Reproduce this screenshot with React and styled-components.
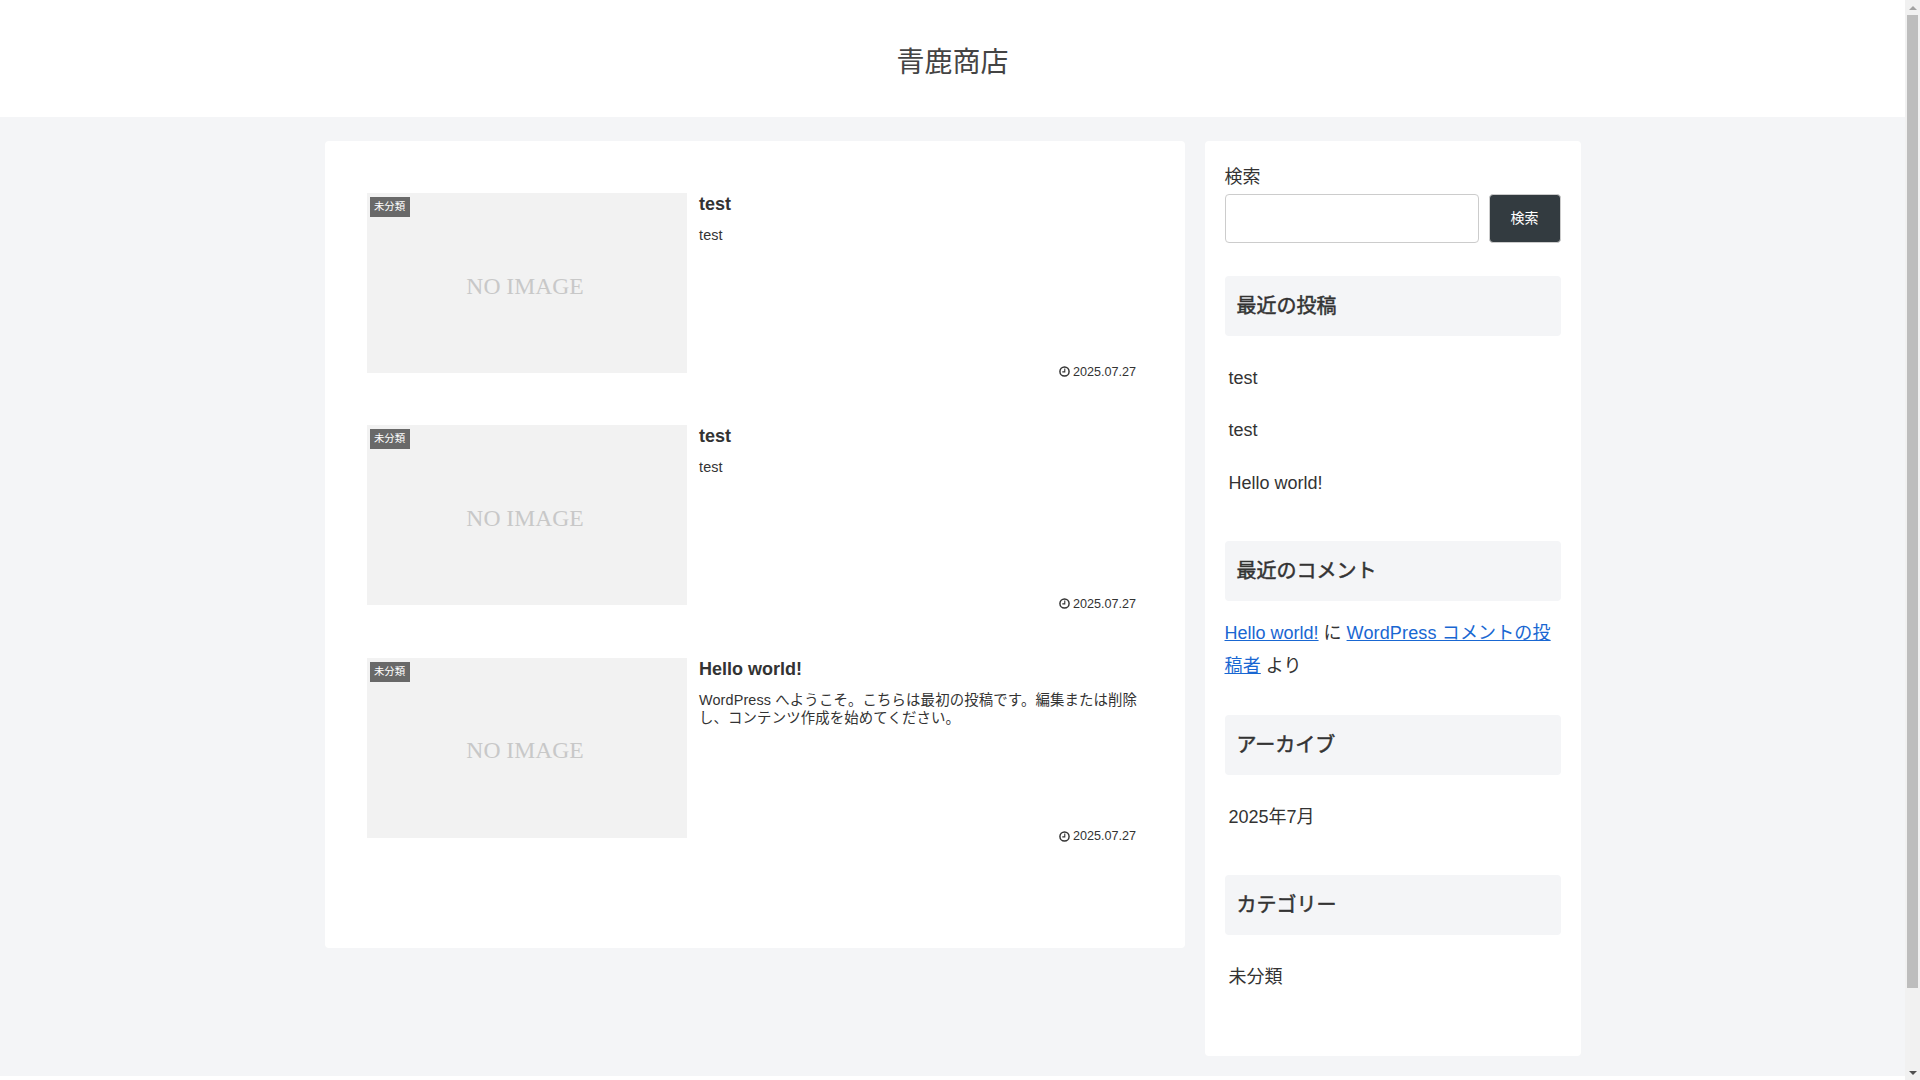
import React from "react";
import styled, { createGlobalStyle } from "styled-components";

const Global = createGlobalStyle`
  * { box-sizing: border-box; }
  html, body { margin: 0; padding: 0; }
  body {
    background: #f4f5f7;
    color: #333;
    font-family: "Liberation Sans", "Noto Sans CJK JP", sans-serif;
    font-size: 18px;
  }
`;

const Page = styled.div`
  padding-right: 15px;
`;
const ScrollTrack = styled.div`
  position: fixed;
  top: 0;
  right: 0;
  bottom: 0;
  width: 15px;
  background: #f1f1f1;
  display: flex;
  flex-direction: column;
  align-items: center;
`;
const ScrollButton = styled.div`
  flex: 0 0 15px;
  display: flex;
  align-items: center;
  justify-content: center;
`;
const ArrowUp = styled.span`
  width: 0;
  height: 0;
  border-left: 4px solid transparent;
  border-right: 4px solid transparent;
  border-bottom: 4px solid #a3a3a3;
`;
const ArrowDown = styled.span`
  width: 0;
  height: 0;
  border-left: 4px solid transparent;
  border-right: 4px solid transparent;
  border-top: 4px solid #505050;
`;
const ScrollThumb = styled.div`
  flex: 0 0 973px;
  width: 11px;
  background: #bdbdbd;
  margin-bottom: auto;
`;

const Header = styled.header`
  height: 117px;
  background: #fff;
  display: flex;
  justify-content: center;
  padding-top: 43px;
`;
const SiteName = styled.div`
  font-size: 28px;
  line-height: 40px;
  color: #444;
`;
const Content = styled.div`
  width: 1256px;
  margin: 24px auto 20px;
  display: flex;
  gap: 20px;
  align-items: flex-start;
`;
const Main = styled.main`
  width: 860px;
  height: 807px;
  background: #fff;
  border-radius: 4px;
  padding: 52px 42px 0;
`;
const Card = styled.article`
  height: 232.4px;
  display: flex;
  align-items: flex-start;
  gap: 12.5px;
`;
const Thumb = styled.div`
  position: relative;
  flex: 0 0 320px;
  height: 180px;
  background: #f2f2f2;
  display: flex;
  align-items: center;
  justify-content: center;
  padding: 6px 3px 0 0;
  font-family: "Liberation Serif", serif;
  font-size: 23.6px;
  color: #c8c8c8;
`;
const Label = styled.span`
  position: absolute;
  left: 3px;
  top: 4px;
  width: 40px;
  height: 20px;
  background: #696969;
  color: #fff;
  font-family: "Liberation Sans", "Noto Sans CJK JP", sans-serif;
  font-size: 10.4px;
  line-height: 20px;
  text-align: center;
`;
const Body = styled.div`
  flex: 1;
  min-width: 0;
  height: 188.6px;
  display: flex;
  flex-direction: column;
`;
const Title = styled.h2`
  margin: -1px 0 0;
  font-size: 18px;
  font-weight: 700;
  line-height: 24px;
`;
const Excerpt = styled.p`
  margin: 10px 0 0;
  font-size: 14.4px;
  line-height: 18.7px;
  letter-spacing: 0.14px;
  width: 445px;
`;
const Meta = styled.div`
  margin-top: auto;
  padding-right: 6.5px;
  display: flex;
  justify-content: flex-end;
  align-items: center;
  gap: 3px;
  font-size: 12.6px;
  line-height: 20px;
`;
const ClockIcon = () => (
  <svg width="11" height="11" viewBox="0 0 12 12" fill="none" stroke="#333" strokeWidth="1.6">
    <circle cx="6" cy="6" r="5" />
    <path d="M6.3 2.8V6.4H3.6" strokeWidth="1.2" />
  </svg>
);
const Sidebar = styled.aside`
  width: 376px;
  height: 915px;
  background: #fff;
  border-radius: 4px;
  padding: 19px 20px 0;
`;
const SearchLabel = styled.div`
  font-size: 18px;
  line-height: 34px;
`;
const SearchRow = styled.div`
  display: flex;
  gap: 10px;
  margin-bottom: 33px;
`;
const SearchInput = styled.div`
  width: 254px;
  height: 49px;
  background: #fff;
  border: 1px solid #ccc;
  border-radius: 4px;
`;
const SearchButton = styled.div`
  width: 72px;
  height: 49px;
  background: #333b40;
  border: 1px solid #ccc;
  border-radius: 4px;
  color: #fff;
  font-size: 14px;
  line-height: 47px;
  text-align: center;
`;
const Widget = styled.section`
  margin-bottom: 31.8px;
`;
const WidgetTitle = styled.h3`
  margin: 0 0 15.7px;
  height: 60px;
  background: #f4f5f7;
  border-radius: 4px;
  padding: 0 12px;
  font-size: 20px;
  font-weight: 400;
  -webkit-text-stroke: 0.5px #333;
  line-height: 61px;
`;
const List = styled.ul`
  list-style: none;
  margin: 0;
  padding: 0;
`;
const Item = styled.li`
  height: 52.5px;
  line-height: 52.5px;
  padding-left: 4px;
`;
const Comment = styled.p`
  margin: 0;
  line-height: 33.3px;
`;
const Anchor = styled.a`
  color: #1967d2;
  text-decoration: underline;
  letter-spacing: ${(p) => (p.$wide ? "0.15px" : "0")};
`;
const Footer = styled.footer`
  height: 89px;
  background: #fff;
`;

const posts = [
  { title: "test", text: "test" },
  { title: "test", text: "test" },
  {
    title: "Hello world!",
    text: "WordPress へようこそ。こちらは最初の投稿です。編集または削除し、コンテンツ作成を始めてください。",
  },
];

export default function App() {
  return (
    <Page>
      <Global />
      <Header>
        <SiteName>青鹿商店</SiteName>
      </Header>
      <Content>
        <Main>
          {posts.map((p, i) => (
            <Card key={i}>
              <Thumb>
                NO IMAGE
                <Label>未分類</Label>
              </Thumb>
              <Body>
                <Title>{p.title}</Title>
                <Excerpt>{p.text}</Excerpt>
                <Meta>
                  <ClockIcon />
                  2025.07.27
                </Meta>
              </Body>
            </Card>
          ))}
        </Main>
        <Sidebar>
          <SearchLabel>検索</SearchLabel>
          <SearchRow>
            <SearchInput />
            <SearchButton>検索</SearchButton>
          </SearchRow>
          <Widget>
            <WidgetTitle>最近の投稿</WidgetTitle>
            <List>
              <Item>test</Item>
              <Item>test</Item>
              <Item>Hello world!</Item>
            </List>
          </Widget>
          <Widget>
            <WidgetTitle>最近のコメント</WidgetTitle>
            <Comment>
              <Anchor href="#">Hello world!</Anchor> に <Anchor href="#" $wide>WordPress コメントの投稿者</Anchor> より
            </Comment>
          </Widget>
          <Widget>
            <WidgetTitle>アーカイブ</WidgetTitle>
            <List>
              <Item>2025年7月</Item>
            </List>
          </Widget>
          <Widget>
            <WidgetTitle>カテゴリー</WidgetTitle>
            <List>
              <Item>未分類</Item>
            </List>
          </Widget>
        </Sidebar>
      </Content>
      <Footer />
      <ScrollTrack>
        <ScrollButton><ArrowUp /></ScrollButton>
        <ScrollThumb />
        <ScrollButton><ArrowDown /></ScrollButton>
      </ScrollTrack>
    </Page>
  );
}
